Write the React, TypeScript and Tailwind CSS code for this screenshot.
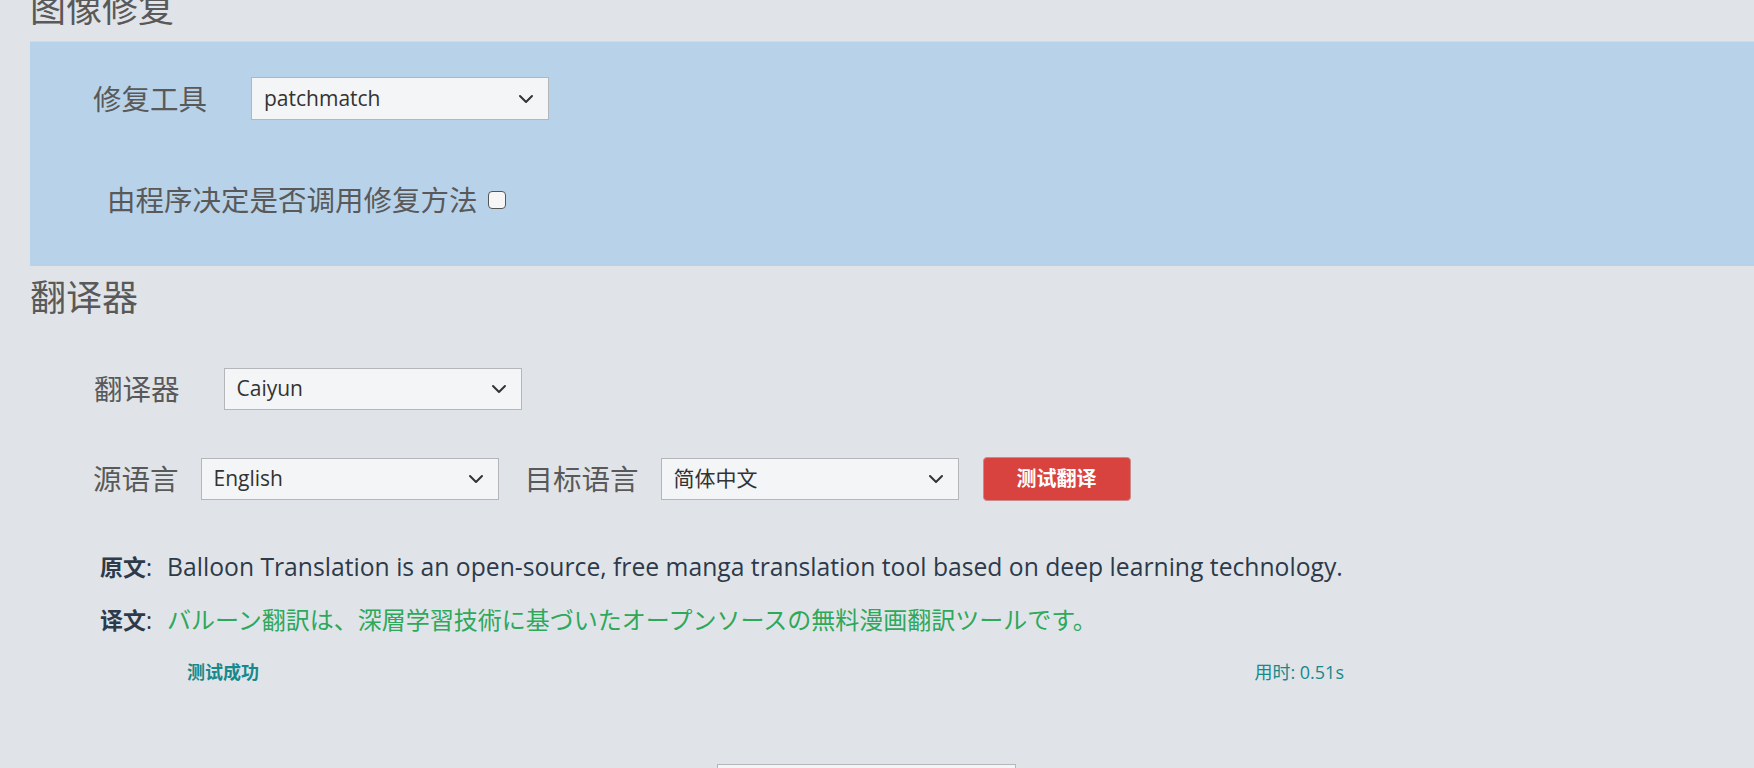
import React from 'react'

const cjk = "font-['Open_Sans','Noto_Sans_CJK_SC',sans-serif]"

function Chevron() {
  return (
    <svg width="16" height="10" viewBox="0 0 16 10" fill="none" className="shrink-0">
      <path d="M2 2l6 6 6-6" stroke="#333" strokeWidth="2" strokeLinecap="round" strokeLinejoin="round" />
    </svg>
  )
}

function Select({ value, className = '' }: { value: string; className?: string }) {
  return (
    <div
      className={`flex h-[42px] w-[298px] items-center justify-between border border-[#b4b6b9] bg-[#f4f5f6] pl-[12px] pr-[14px] text-[21px] text-[#333] ${className}`}
    >
      <span>{value}</span>
      <Chevron />
    </div>
  )
}

function Label({ children, className = '' }: { children: React.ReactNode; className?: string }) {
  return <span className={`text-[28.5px] leading-[40px] text-[#595959] ${className}`}>{children}</span>
}

export default function App() {
  return (
    <div className={`h-[768px] w-full overflow-hidden bg-[#e0e4e9] ${cjk}`}>
      {/* 图像修复 */}
      <h1 className="-mt-[9px] mb-[14px] ml-[30px] h-[36px] text-[36px] leading-[36px] text-[#595959]">图像修复</h1>

      <div className="ml-[30px] h-[225px] border-t border-[#c8def0] bg-[#b8d3e9] pt-[35px]">
        <div className="flex items-center pl-[63px]">
          <Label>修复工具</Label>
          <Select value="patchmatch" className="ml-[44px] h-[43px]" />
        </div>
        <div className="mt-[60px] flex items-center pl-[77px]">
          <Label>由程序决定是否调用修复方法</Label>
          <span className="ml-[10px] h-[18px] w-[18px] rounded-[4px] border-[1.5px] border-[#555] bg-[#f6f6f6]" />
        </div>
      </div>

      {/* 翻译器 */}
      <h2 className="mt-[14px] ml-[30px] h-[36px] text-[36px] leading-[36px] text-[#595959]">翻译器</h2>

      <div className="ml-[30px]">
        <div className="mt-[52px] flex items-center pl-[64px]">
          <Label>翻译器</Label>
          <Select value="Caiyun" className="ml-[44px] h-[41px]" />
        </div>

        <div className="mt-[47px] flex items-center pl-[63px]">
          <Label>源语言</Label>
          <Select value="English" className="ml-[22px]" />
          <Label className="ml-[26px]">目标语言</Label>
          <Select value="简体中文" className="ml-[22px]" />
          <button className="ml-[24px] h-[44px] w-[148px] rounded-[4px] border border-[#c98a8a] bg-[#d9433f] text-[20px] font-bold text-white">
            测试翻译
          </button>
        </div>

        <div className="mt-[50px] flex h-[32px] items-center pl-[70px] text-[24.7px] leading-[32px]">
          <span className="text-[23px] font-bold text-[#2d3a4a]">原文</span>
          <span className="text-[23px] text-[#2d3a4a]">:</span>
          <span className="ml-[15px] text-[#2d3a4a]">
            Balloon Translation is an open-source, free manga translation tool based on deep learning technology.
          </span>
        </div>

        <div className="mt-[21px] flex h-[32px] items-center pl-[70px] text-[24px] leading-[32px]">
          <span className="text-[23px] font-bold text-[#2d3a4a]">译文</span>
          <span className="text-[23px] text-[#2d3a4a]">:</span>
          <span className="ml-[15px] font-['Open_Sans','Noto_Sans_CJK_JP',sans-serif] text-[#2ea85a]">
            バルーン翻訳は、深層学習技術に基づいたオープンソースの無料漫画翻訳ツールです。
          </span>
        </div>

        <div className="mt-[24px] flex h-[24px] w-[1314px] items-center justify-between pl-[157px] text-[18px] leading-[24px] text-[#17898b]">
          <span className="font-bold">测试成功</span>
          <span>用时: 0.51s</span>
        </div>
      </div>

      <div className="mt-[80px] ml-[717px] h-[43px] w-[299px] border border-[#b4b6b9] bg-[#f4f5f6]" />
    </div>
  )
}
